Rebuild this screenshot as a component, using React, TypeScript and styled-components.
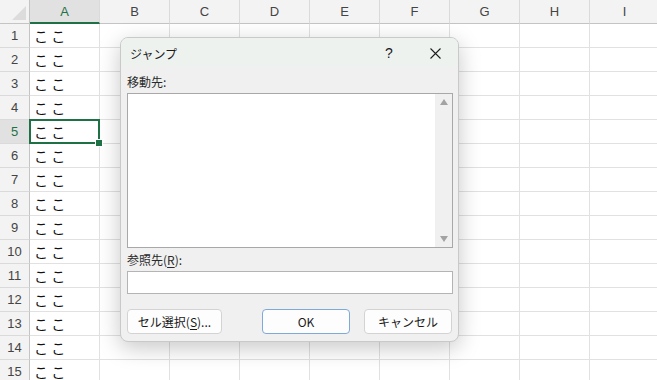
import styled, { createGlobalStyle } from "styled-components";

const GlobalStyle = createGlobalStyle`
  html, body {
    margin: 0;
    padding: 0;
    background: #ffffff;
    overflow: hidden;
  }
  body {
    font-family: "Noto Sans CJK JP", "Noto Sans", sans-serif;
  }
`;

const columns = ["A", "B", "C", "D", "E", "F", "G", "H", "I"];
const rows = Array.from({ length: 15 }, (_, i) => i + 1);
const activeRow = 5;

function App() {
  return (
    <>
      <GlobalStyle />
      <Sheet>
        <Grid>
          <Corner />
          {columns.map((c) => (
            <ColHeader key={c} $selected={c === "A"}>
              {c}
            </ColHeader>
          ))}
          {rows.map((r) => (
            <Row key={r} r={r} />
          ))}
        </Grid>

        <Dialog>
          <TitleBar>
            <Title>ジャンプ</Title>
            <TitleButtons>
              <HelpMark>?</HelpMark>
              <CloseMark>
                <svg width="11" height="11" viewBox="0 0 11 11">
                  <path d="M0.5 0.5 L10.5 10.5 M10.5 0.5 L0.5 10.5" stroke="#1f1f1f" strokeWidth="1.1" />
                </svg>
              </CloseMark>
            </TitleButtons>
          </TitleBar>
          <Body>
            <Label>移動先:</Label>
            <ListBox>
              <ScrollTrack>
                <Arrow $dir="up" />
                <Arrow $dir="down" />
              </ScrollTrack>
            </ListBox>
            <Label $gap>
              参照先(<u>R</u>):
            </Label>
            <TextBox />
            <ButtonRow>
              <Button $width={95}>
                セル選択(<u>S</u>)...
              </Button>
              <Spacer />
              <Button $width={88} $primary>
                OK
              </Button>
              <Button $width={88}>キャンセル</Button>
            </ButtonRow>
          </Body>
        </Dialog>
      </Sheet>
    </>
  );
}

function Row({ r }: { r: number }) {
  const selected = r === activeRow;
  return (
    <>
      <RowHeader $selected={selected}>{r}</RowHeader>
      {columns.map((c) => (
        <Cell key={c} $active={selected && c === "A"}>
          {c === "A" ? "こ こ" : ""}
        </Cell>
      ))}
    </>
  );
}

const Sheet = styled.div`
  position: relative;
  width: 657px;
  height: 380px;
  overflow: hidden;
`;

const Grid = styled.div`
  display: grid;
  grid-template-columns: 30px repeat(9, 70px);
  grid-auto-rows: 24px;
  width: 660px;
`;

const Corner = styled.div`
  position: relative;
  background: #f3f3f3;
  border-right: 1px solid #c4c4c4;
  border-bottom: 1px solid #c4c4c4;
  box-sizing: border-box;
  &::after {
    content: "";
    position: absolute;
    right: 3px;
    bottom: 3px;
    border-style: solid;
    border-width: 0 0 14px 14px;
    border-color: transparent transparent #dcdcdc transparent;
  }
`;

const ColHeader = styled.div<{ $selected?: boolean }>`
  box-sizing: border-box;
  display: flex;
  align-items: center;
  justify-content: center;
  background: ${(p) => (p.$selected ? "#e1e1e1" : "#f3f3f3")};
  border-right: 1px solid #dadada;
  border-bottom: ${(p) => (p.$selected ? "2px solid #1e7145" : "1px solid #c4c4c4")};
  color: ${(p) => (p.$selected ? "#1e7145" : "#444444")};
  font-family: "Liberation Sans", Arial, sans-serif;
  font-size: 13px;
  padding-top: ${(p) => (p.$selected ? "1px" : "0")};
`;

const RowHeader = styled.div<{ $selected?: boolean }>`
  box-sizing: border-box;
  display: flex;
  align-items: center;
  justify-content: center;
  background: ${(p) => (p.$selected ? "#e1e1e1" : "#f3f3f3")};
  border-right: 1px solid #c4c4c4;
  border-bottom: 1px solid #dadada;
  color: ${(p) => (p.$selected ? "#1e7145" : "#444444")};
  font-family: "Liberation Sans", Arial, sans-serif;
  font-size: 13px;
`;

const Cell = styled.div<{ $active?: boolean }>`
  position: relative;
  box-sizing: border-box;
  border-right: 1px solid #e1e1e1;
  border-bottom: 1px solid #e1e1e1;
  padding-left: 4px;
  display: flex;
  align-items: center;
  font-family: "Noto Sans CJK JP", sans-serif;
  font-size: 14px;
  color: #111111;
  white-space: pre;
  ${(p) =>
    p.$active &&
    `
    z-index: 1;
    &::before {
      content: "";
      position: absolute;
      left: -1px;
      top: -1px;
      right: -1px;
      bottom: -1px;
      border: 2px solid #1e7145;
    }
    &::after {
      content: "";
      position: absolute;
      right: -4px;
      bottom: -4px;
      width: 6px;
      height: 6px;
      background: #1e7145;
      border: 1px solid #ffffff;
    }
  `}
`;

const Dialog = styled.div`
  position: absolute;
  left: 120px;
  top: 37px;
  width: 339px;
  height: 305px;
  box-sizing: border-box;
  border: 1px solid #c9c9c9;
  border-radius: 8px;
  background: #f0f0f0;
  box-shadow: 0 6px 22px rgba(0, 0, 0, 0.22);
  display: flex;
  flex-direction: column;
  overflow: hidden;
  font-family: "Noto Sans CJK JP", sans-serif;
  color: #1a1a1a;
`;

const TitleBar = styled.div`
  height: 28px;
  display: flex;
  align-items: center;
  justify-content: space-between;
  padding-left: 9px;
  background: #eef2ef;
  flex-shrink: 0;
`;

const Title = styled.span`
  font-size: 12px;
  padding-top: 2px;
`;

const TitleButtons = styled.div`
  display: flex;
  align-items: center;
  height: 100%;
`;

const HelpMark = styled.span`
  width: 46px;
  text-align: center;
  font-family: "Liberation Sans", Arial, sans-serif;
  font-size: 14px;
  padding-top: 2px;
  padding-left: 1px;
`;

const CloseMark = styled.span`
  width: 46px;
  display: flex;
  justify-content: center;
  padding-top: 3px;
`;

const Body = styled.div`
  flex: 1;
  display: flex;
  flex-direction: column;
  padding: 7px 5px 7px 6px;
`;

const Label = styled.div<{ $gap?: boolean }>`
  font-size: 12px;
  line-height: 14px;
  margin-top: ${(p) => (p.$gap ? "5px" : "2px")};
  margin-bottom: 4px;
  color: #2a2a2a;
  u {
    text-underline-offset: 2px;
  }
`;

const ListBox = styled.div`
  height: 155px;
  box-sizing: border-box;
  border: 1px solid #a8a8a8;
  background: #ffffff;
  display: flex;
  justify-content: flex-end;
`;

const ScrollTrack = styled.div`
  width: 17px;
  background: #f0f0f0;
  display: flex;
  flex-direction: column;
  justify-content: space-between;
  align-items: center;
  padding: 5px 0;
`;

const Arrow = styled.div<{ $dir: "up" | "down" }>`
  width: 0;
  height: 0;
  border-left: 4px solid transparent;
  border-right: 4px solid transparent;
  ${(p) =>
    p.$dir === "up"
      ? "border-bottom: 6px solid #a3a3a3;"
      : "border-top: 6px solid #a3a3a3;"}
`;

const TextBox = styled.div`
  height: 23px;
  box-sizing: border-box;
  border: 1px solid #b4b4b4;
  background: #ffffff;
`;

const ButtonRow = styled.div`
  display: flex;
  align-items: center;
  gap: 14px;
  padding-right: 1px;
  margin-top: auto;
`;

const Spacer = styled.div`
  flex: 1;
`;

const Button = styled.div<{ $width: number; $primary?: boolean }>`
  width: ${(p) => p.$width}px;
  height: 25px;
  box-sizing: border-box;
  display: flex;
  align-items: center;
  justify-content: center;
  background: #fdfdfd;
  border: 1px solid ${(p) => (p.$primary ? "#7fa9d9" : "#d3d3d3")};
  border-radius: 4px;
  font-size: 12px;
  color: #1a1a1a;
  u {
    text-underline-offset: 2px;
  }
`;

export default App;
